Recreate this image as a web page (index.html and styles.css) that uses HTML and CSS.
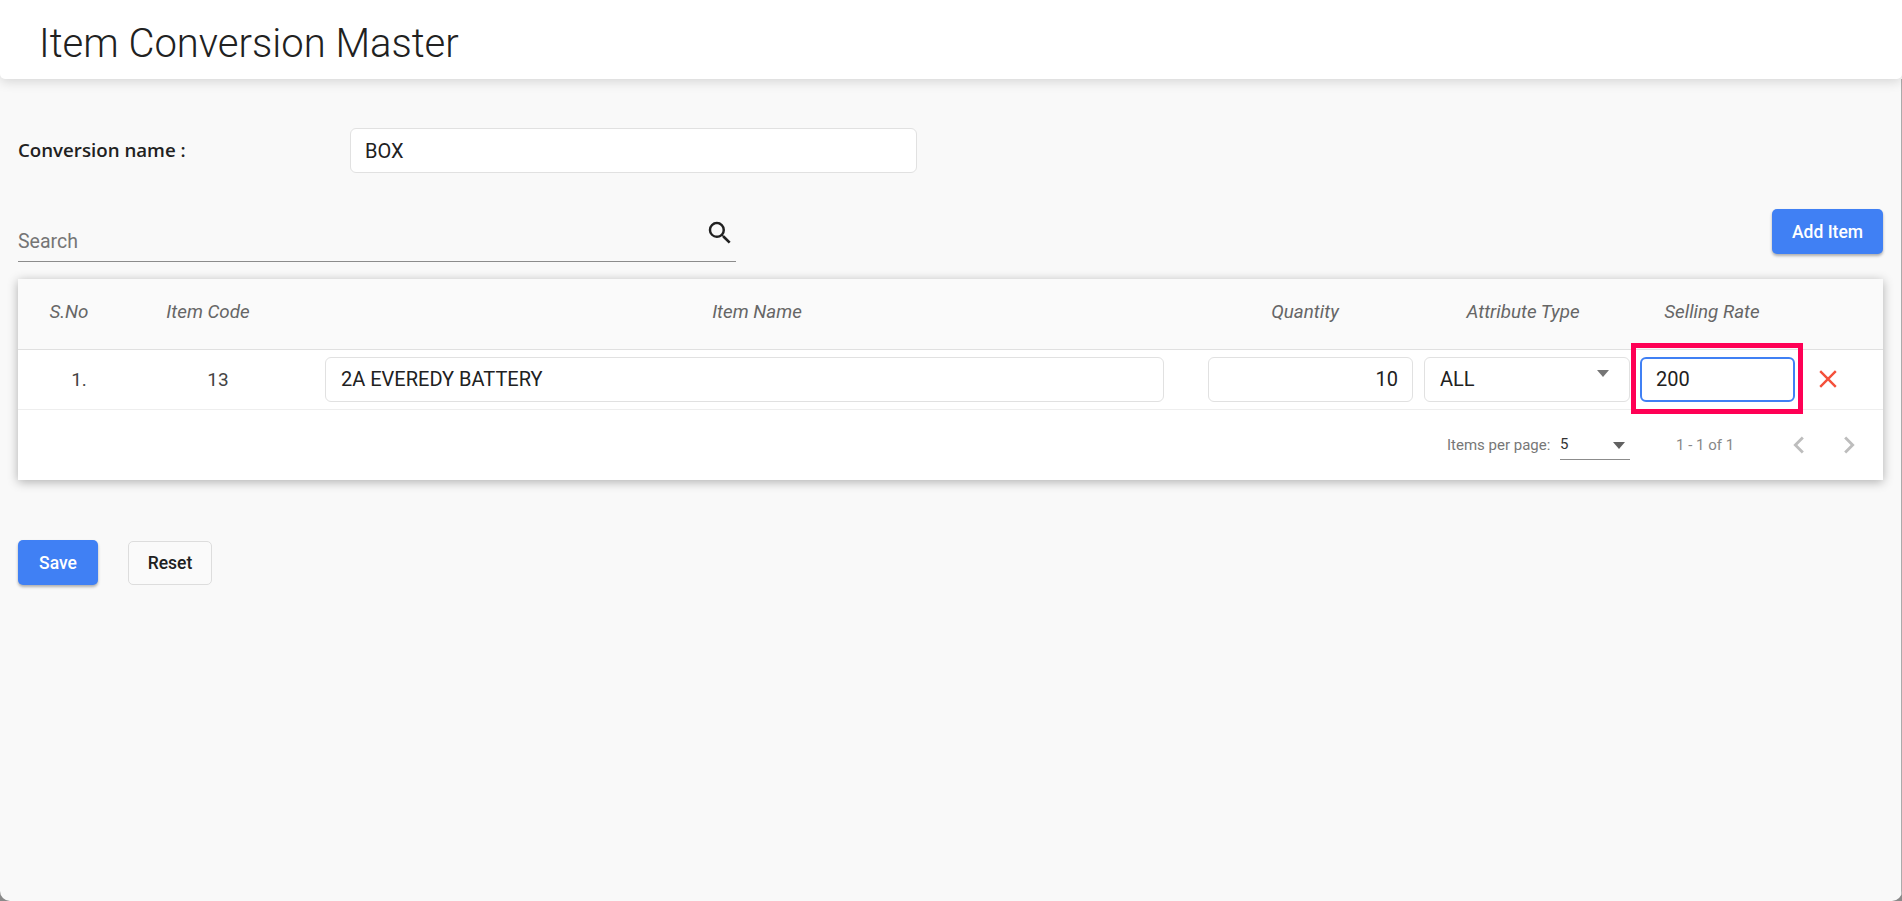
FILE: index.html
```html
<!DOCTYPE html>
<html lang="en">
<head>
<meta charset="utf-8">
<title>Item Conversion Master</title>
<link rel="stylesheet" href="styles.css">
</head>
<body>
<div class="app">
  <header class="topbar"><h1>Item Conversion Master</h1></header>
  <main class="content">
    <div class="name-row">
      <label class="name-label">Conversion name :</label>
      <input class="field name-input" value="BOX">
    </div>
    <div class="tools-row">
      <div class="search">
        <span class="search-text">Search</span>
        <svg class="search-icon" viewBox="0 0 24 24"><path d="M15.5 14h-.79l-.28-.27A6.47 6.47 0 0 0 16 9.5 6.5 6.5 0 1 0 9.5 16c1.61 0 3.09-.59 4.23-1.57l.27.28v.79l5 4.99L20.49 19l-4.99-5zm-6 0C7.01 14 5 11.99 5 9.5S7.01 5 9.5 5 14 7.01 14 9.5 11.99 14 9.5 14z"/></svg>
      </div>
      <button class="btn primary add-btn">Add Item</button>
    </div>
    <section class="card">
      <div class="thead">
        <div>S.No</div><div>Item Code</div><div>Item Name</div><div>Quantity</div><div>Attribute Type</div><div>Selling Rate</div>
      </div>
      <div class="trow">
        <div class="c-sno">1.</div>
        <div class="c-code">13</div>
        <input class="field c-name" value="2A EVEREDY BATTERY">
        <input class="field c-qty" value="10">
        <div class="field c-attr">ALL<span class="attr-arrow"></span></div>
        <div class="c-rate">
          <input class="field rate-input" value="200">
          <span class="highlight"></span>
        </div>
        <svg class="del" viewBox="0 0 18 18"><path d="M1.2 1.2 16.8 16.8M16.8 1.2 1.2 16.8"/></svg>
      </div>
      <div class="paginator">
        <span class="per-label">Items per page:</span>
        <div class="per-select"><span>5</span><span class="per-arrow"></span></div>
        <span class="range">1 - 1 of 1</span>
        <svg class="chev prev" viewBox="0 0 24 24"><path d="M15.41 7.41 14 6l-6 6 6 6 1.41-1.41L10.83 12z"/></svg>
        <svg class="chev next" viewBox="0 0 24 24"><path d="M10 6 8.59 7.41 13.17 12l-4.58 4.59L10 18l6-6z"/></svg>
      </div>
    </section>
    <div class="actions">
      <button class="btn primary save-btn">Save</button>
      <button class="btn reset-btn">Reset</button>
    </div>
  </main>
</div>
</body>
</html>
```

FILE: styles.css
```css
* { box-sizing: border-box; }
html, body { margin: 0; height: 100%; background: #8a8a8a; overflow: hidden; }
body { font-family: Roboto, "Liberation Sans", sans-serif; color: #212121; }
.app { width: 1902px; height: 901px; background: #f9f9f9; border-radius: 0 0 10px 10px; overflow: hidden; }

.topbar { position: relative; height: 79px; background: #fff; border-radius: 0 0 5px 5px; box-shadow: 0 3px 12px rgba(0,0,0,.14); padding: 8px 0 0 39px; display: flex; align-items: center; }
.topbar h1 { margin: 0; font-size: 40px; font-weight: 300; color: #212121; line-height: 1; }

.content { height: 822px; padding: 49px 18px 0 18px; border-right: 1px solid #ababab; }
.name-row { display: flex; align-items: center; height: 45px; }
.name-label { width: 332px; padding-bottom: 2px; font-family: "Open Sans", sans-serif; font-size: 18.7px; font-weight: 600; color: #212121; }
.field { font: 400 20px Roboto, sans-serif; color: #212121; background: #fff; border: 1px solid #e1e1e1; border-radius: 6px; padding: 0 14px; height: 45px; outline: 0; }
.name-input { width: 567px; }

.tools-row { display: flex; justify-content: space-between; margin-top: 36px; height: 53px; }
.search { position: relative; width: 718px; height: 53px; border-bottom: 1px solid #8c8c8c; display: flex; align-items: flex-end; justify-content: space-between; }
.search-text { font-size: 19.5px; color: #757575; padding-bottom: 8px; }
.search-icon { position: absolute; right: 1px; top: 9px; width: 30px; height: 30px; fill: #212121; }
.btn { font: 500 17.5px Roboto, sans-serif; border-radius: 5px; cursor: pointer; padding: 0; }
.primary { background: #4080f4; color: #fff; border: 0; box-shadow: 0 2px 3px rgba(0,0,0,.3); }
.add-btn { width: 111px; height: 45px; }

.card { margin-top: 17px; height: 201px; background: #fff; box-shadow: 0 2px 10px rgba(0,0,0,.3); }
.thead { height: 71px; padding-bottom: 4px; background: #fafafa; border-bottom: 1px solid #e0e0e0; display: grid; grid-template-columns: 102px 176px 922px 174px 262px 116px; align-items: center; text-align: center; font-size: 18.8px; font-style: italic; color: #666; }
.trow { height: 60px; border-bottom: 1px solid #eee; display: flex; align-items: center; font-size: 19px; color: #444; padding-bottom: 1px; }
.c-sno { width: 122px; text-align: center; }
.c-code { width: 156px; text-align: center; }
.c-name { margin-left: 29px; width: 839px; padding-left: 15px; }
.c-qty { margin-left: 44px; width: 205px; text-align: right; }
.c-attr { position: relative; margin-left: 11px; width: 206px; display: flex; align-items: center; padding-left: 15px; }
.attr-arrow { position: absolute; right: 20px; top: 12px; border: 6px solid transparent; border-top: 7px solid #757575; border-bottom: 0; }
.c-rate { position: relative; margin-left: 10px; }
.rate-input { display: block; width: 155px; border: 2px solid #4080f4; padding: 0 14px; }
.highlight { position: absolute; left: -9px; top: -14px; width: 172px; height: 71px; border: 5px solid #ff0055; }
.del { width: 18px; height: 18px; margin-left: 24px; fill: none; stroke: #f4503a; stroke-width: 2.4; }

.paginator { height: 70px; display: flex; align-items: center; font-size: 15px; color: #777; }
.per-label { margin-left: 1429px; width: 113px; }
.per-select { position: relative; width: 70px; height: 30px; border-bottom: 1px solid #8c8c8c; font-size: 15px; color: #333; display: flex; align-items: center; padding-bottom: 1px; }
.per-arrow { position: absolute; right: 5px; top: 12px; border: 6px solid transparent; border-top: 7px solid #616161; border-bottom: 0; }
.range { margin-left: 46px; width: 106px; color: #888; }
.chev { width: 34px; height: 34px; fill: #bdbdbd; }
.chev.next { margin-left: 16px; }

.actions { display: flex; align-items: center; gap: 30px; margin-top: 60px; }
.save-btn { width: 80px; height: 45px; }
.reset-btn { width: 84px; height: 44px; background: #fafafa; border: 1px solid #ddd; color: #212121; }
```
